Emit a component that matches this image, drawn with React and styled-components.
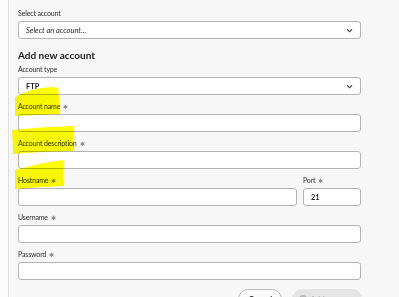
import React from 'react';
import styled, { createGlobalStyle } from 'styled-components';

const GlobalStyle = createGlobalStyle`
  html, body {
    margin: 0;
    padding: 0;
    background: #fbfbfb;
    overflow: hidden;
  }
  body {
    font-family: Lato, 'Noto Sans', sans-serif;
    color: #2c2c2c;
  }
`;

const Page = styled.div`
  position: relative;
  width: 399px;
  height: 297px;
  padding-left: 8px;
  box-sizing: border-box;
  overflow: hidden;
`;

const Panel = styled.div`
  height: 100%;
  border-left: 1px solid #dedede;
  background: #f7f7f7;
  padding: 8px 0 0 9px;
  box-sizing: border-box;
`;

const Form = styled.div`
  width: 343px;
  display: flex;
  flex-direction: column;
`;

const Field = styled.div`
  display: flex;
  flex-direction: column;
  margin-bottom: ${(p) => (p.gap !== undefined ? p.gap : 6)}px;
  flex: ${(p) => (p.grow ? 1 : 'none')};
  width: ${(p) => (p.width ? `${p.width}px` : 'auto')};
`;

const Label = styled.label`
  font-size: 7px;
  line-height: 10px;
  height: 10px;
  color: #2e2e2e;
  letter-spacing: -0.15px;
  margin-bottom: 3px;
`;

const Star = styled.span`
  color: #8a8a8a;
  font-size: 6px;
  margin-left: 3px;
`;

const Heading = styled.h2`
  margin: 2px 0 2px;
  font-size: 10px;
  line-height: 14px;
  font-weight: 700;
  color: #222;
`;

const Box = styled.div`
  height: 18px;
  box-sizing: border-box;
  background: #fff;
  border: 1px solid #b4b4b4;
  border-radius: 3px;
  display: flex;
  align-items: center;
  justify-content: space-between;
  padding: 0 7px;
  font-size: 7.5px;
  color: #1e1e1e;
  font-style: ${(p) => (p.italic ? 'italic' : 'normal')};
  font-weight: ${(p) => (p.bold ? 700 : 400)};
`;

const Row = styled.div`
  display: flex;
  gap: 6px;
`;

const Buttons = styled.div`
  display: flex;
  justify-content: flex-end;
  gap: 10px;
  margin-top: 9px;
  width: 344px;
`;

const Button = styled.button`
  height: 20px;
  border-radius: 10px;
  font-family: inherit;
  font-size: 8px;
  font-weight: 700;
  padding: 0 ${(p) => p.pad}px;
  display: flex;
  align-items: center;
  gap: 3px;
  border: 1px solid ${(p) => (p.disabled ? '#e4e4e4' : '#b8b8b8')};
  background: ${(p) => (p.disabled ? '#e4e4e4' : '#fafafa')};
  color: ${(p) => (p.disabled ? '#b2b2b2' : '#2a2a2a')};
`;

const Marker = styled.svg`
  position: absolute;
  top: 0;
  left: 0;
  pointer-events: none;
  mix-blend-mode: multiply;
`;

const Chevron = () => (
  <svg width="7" height="5" viewBox="0 0 7 5">
    <path d="M1 1.2 L3.5 3.6 L6 1.2" fill="none" stroke="#555" strokeWidth="1.3" />
  </svg>
);

const Req = ({ children }) => (
  <Label>
    {children}
    <Star>✱</Star>
  </Label>
);

export default function App() {
  return (
    <>
      <GlobalStyle />
      <Page>
        <Panel>
          <Form>
            <Field gap={7}>
              <Label>Select account</Label>
              <Box italic>
                Select an account...
                <Chevron />
              </Box>
            </Field>
            <Heading>Add new account</Heading>
            <Field>
              <Label>Account type</Label>
              <Box bold>
                FTP
                <Chevron />
              </Box>
            </Field>
            <Field>
              <Req>Account name</Req>
              <Box />
            </Field>
            <Field>
              <Req>Account description</Req>
              <Box />
            </Field>
            <Row>
              <Field grow>
                <Req>Hostname</Req>
                <Box />
              </Field>
              <Field width={58}>
                <Req>Port</Req>
                <Box bold>21</Box>
              </Field>
            </Row>
            <Field>
              <Req>Username</Req>
              <Box />
            </Field>
            <Field gap={0}>
              <Req>Password</Req>
              <Box />
            </Field>
            <Buttons>
              <Button pad={9}>Cancel</Button>
              <Button pad={6} disabled>
                <svg width="8" height="8" viewBox="0 0 8 8">
                  <circle cx="4" cy="4" r="4" fill="#b8b8b8" />
                  <path d="M4 2 V6 M2 4 H6" stroke="#e4e4e4" strokeWidth="1.2" />
                </svg>
                Add account
              </Button>
            </Buttons>
          </Form>
        </Panel>
        <Marker width="399" height="297" viewBox="0 0 399 297">
          <g fill="#ffff00">
            <path d="M15 97 Q30 88 52 87 L58 88 L60 114 L37 115 L15 116 Z" />
            <path d="M12 130 Q40 127 73 126 L74 151 L40 152 L13 154 Z" />
            <path d="M15 170 Q40 163 63 160 L64 186 L40 187 L15 189 Z" />
          </g>
        </Marker>
      </Page>
    </>
  );
}
